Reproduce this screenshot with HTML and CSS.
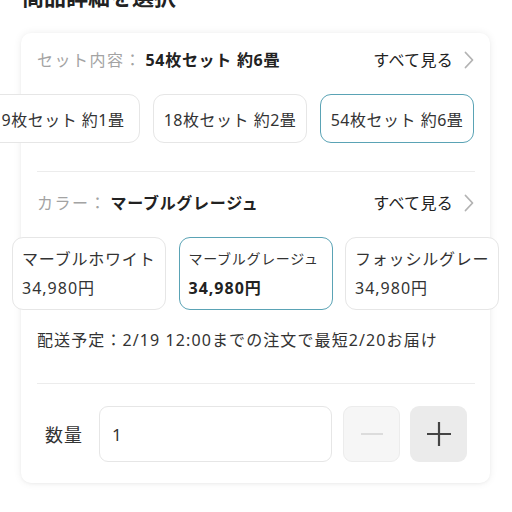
FILE: index.html
```html
<!DOCTYPE html>
<html lang="ja">
<head>
<meta charset="utf-8">
<link rel="stylesheet" href="styles.css">
</head>
<body>
<h2 class="page-title">商品詳細を選択</h2>
<section class="card">
  <div class="opt-head">
    <div class="opt-label"><span class="muted">セット内容</span><span class="muted colon">：</span><strong>54枚セット 約6畳</strong></div>
    <a class="see-all">すべて見る
      <svg width="10" height="18" viewBox="0 0 10 18"><path d="M1.5 1.5 L8.5 9 L1.5 16.5" fill="none" stroke="#b3b3b3" stroke-width="1.8" stroke-linecap="round" stroke-linejoin="round"/></svg>
    </a>
  </div>
  <div class="chips chips-set">
    <div class="chip">9枚セット 約1畳</div>
    <div class="chip">18枚セット 約2畳</div>
    <div class="chip selected">54枚セット 約6畳</div>
  </div>
  <hr class="divider first">
  <div class="opt-head second">
    <div class="opt-label"><span class="muted">カラー</span><span class="muted colon">：</span><strong>マーブルグレージュ</strong></div>
    <a class="see-all">すべて見る
      <svg width="10" height="18" viewBox="0 0 10 18"><path d="M1.5 1.5 L8.5 9 L1.5 16.5" fill="none" stroke="#b3b3b3" stroke-width="1.8" stroke-linecap="round" stroke-linejoin="round"/></svg>
    </a>
  </div>
  <div class="chips chips-color">
    <div class="cchip"><div class="cname">マーブルホワイト</div><div class="cprice">34,980円</div></div>
    <div class="cchip selected"><div class="cname fit">マーブルグレージュ</div><div class="cprice bold">34,980円</div></div>
    <div class="cchip"><div class="cname">フォッシルグレー</div><div class="cprice">34,980円</div></div>
    <div class="cchip"></div>
  </div>
  <p class="delivery">配送予定：2/19 12:00までの注文で最短2/20お届け</p>
  <hr class="divider second">
  <div class="qty">
    <span class="qty-label">数量</span>
    <div class="qty-input">1</div>
    <button class="qty-btn minus" aria-label="減らす">
      <svg width="24" height="24" viewBox="0 0 24 24"><path d="M1 12 H23" stroke="#dcdcdc" stroke-width="2"/></svg>
    </button>
    <button class="qty-btn plus" aria-label="増やす">
      <svg width="26" height="26" viewBox="0 0 26 26"><path d="M1 13 H25 M13 1 V25" stroke="#444" stroke-width="2.2"/></svg>
    </button>
  </div>
</section>
</body>
</html>
```

FILE: styles.css
```css
html, body {
  margin: 0;
  padding: 0;
  background: #fff;
  overflow: hidden;
  width: 512px;
  height: 512px;
}
body {
  font-family: "Noto Sans", "Noto Sans CJK JP", sans-serif;
  color: #333;
}
.page-title {
  margin: -17px 0 0 22px;
  font-size: 22px;
  line-height: 26px;
  font-weight: 700;
  color: #222;
  height: 26px;
}
.card {
  margin: 24px 0 0 21px;
  width: 469px;
  height: 450px;
  box-sizing: border-box;
  padding: 16px 15px 0 16px;
  background: #fff;
  border-radius: 10px;
  box-shadow: 0 0 8px rgba(0,0,0,0.07), 0 1px 3px rgba(0,0,0,0.04);
}
.opt-head {
  display: flex;
  justify-content: space-between;
  align-items: center;
  height: 22px;
  font-size: 16px;
  line-height: 22px;
}
.opt-head.second {
  margin-top: 20px;
}
.muted {
  color: #a3a3a3;
  letter-spacing: 1.5px;
}
.colon {
  display: inline-block;
  width: 16px;
  margin: 0 5px 0 0;
  text-align: center;
  letter-spacing: 0;
}
.opt-label strong {
  font-weight: 700;
  color: #222;
  letter-spacing: 0.7px;
}
.see-all {
  display: flex;
  align-items: center;
  gap: 11px;
  color: #222;
  font-size: 16px;
  letter-spacing: 0.3px;
  margin-right: 1px;
}
.chips {
  display: flex;
  white-space: nowrap;
}
.chips-set {
  margin-top: 23px;
  margin-left: -51px;
  gap: 13px;
}
.chip {
  flex: 0 0 auto;
  width: 154px;
  height: 49px;
  box-sizing: border-box;
  border: 1px solid #e6e6e6;
  border-radius: 11px;
  display: flex;
  align-items: center;
  justify-content: center;
  font-size: 16px;
  letter-spacing: 0.5px;
  color: #333;
  background: #fff;
}
.chip.selected, .cchip.selected {
  border-color: #5aa3b5;
}
.divider {
  border: 0;
  border-top: 1px solid #ececec;
  margin: 0;
}
.divider.first {
  margin-top: 28px;
}
.chips-color {
  margin-top: 23px;
  margin-left: -25px;
  gap: 12.5px;
}
.cchip {
  flex: 0 0 auto;
  width: 154px;
  height: 73px;
  box-sizing: border-box;
  border: 1px solid #e6e6e6;
  border-radius: 11px;
  padding: 8px 9px;
  background: #fff;
  display: flex;
  flex-direction: column;
  gap: 3px;
  overflow: hidden;
}
.cname {
  font-size: 16px;
  letter-spacing: 0.8px;
  line-height: 26px;
  color: #333;
}
.cname.fit {
  font-size: 14px;
  letter-spacing: 0.7px;
}
.cprice {
  font-size: 16px;
  letter-spacing: 1px;
  line-height: 26px;
  color: #333;
}
.cprice.bold {
  font-weight: 700;
  color: #222;
}
.delivery {
  margin: 19px 0 0 0;
  font-size: 16px;
  letter-spacing: 1.1px;
  line-height: 22px;
  color: #333;
}
.divider.second {
  margin-top: 32px;
}
.qty {
  margin-top: 22px;
  display: flex;
  align-items: center;
  padding-left: 8px;
}
.qty-label {
  font-size: 18px;
  letter-spacing: 1px;
  color: #333;
  width: 54px;
}
.qty-input {
  width: 233px;
  height: 56px;
  box-sizing: border-box;
  border: 1px solid #e6e6e6;
  border-radius: 9px;
  padding-left: 12px;
  display: flex;
  align-items: center;
  font-size: 17px;
  color: #333;
}
.qty-btn {
  width: 57px;
  height: 56px;
  box-sizing: border-box;
  border-radius: 9px;
  display: flex;
  align-items: center;
  justify-content: center;
  padding: 0;
}
.qty-btn.minus {
  margin-left: 11px;
  background: #f6f6f6;
  border: 1px solid #ececec;
}
.qty-btn.plus {
  margin-left: 10px;
  background: #ebebeb;
  border: 0;
}
```
